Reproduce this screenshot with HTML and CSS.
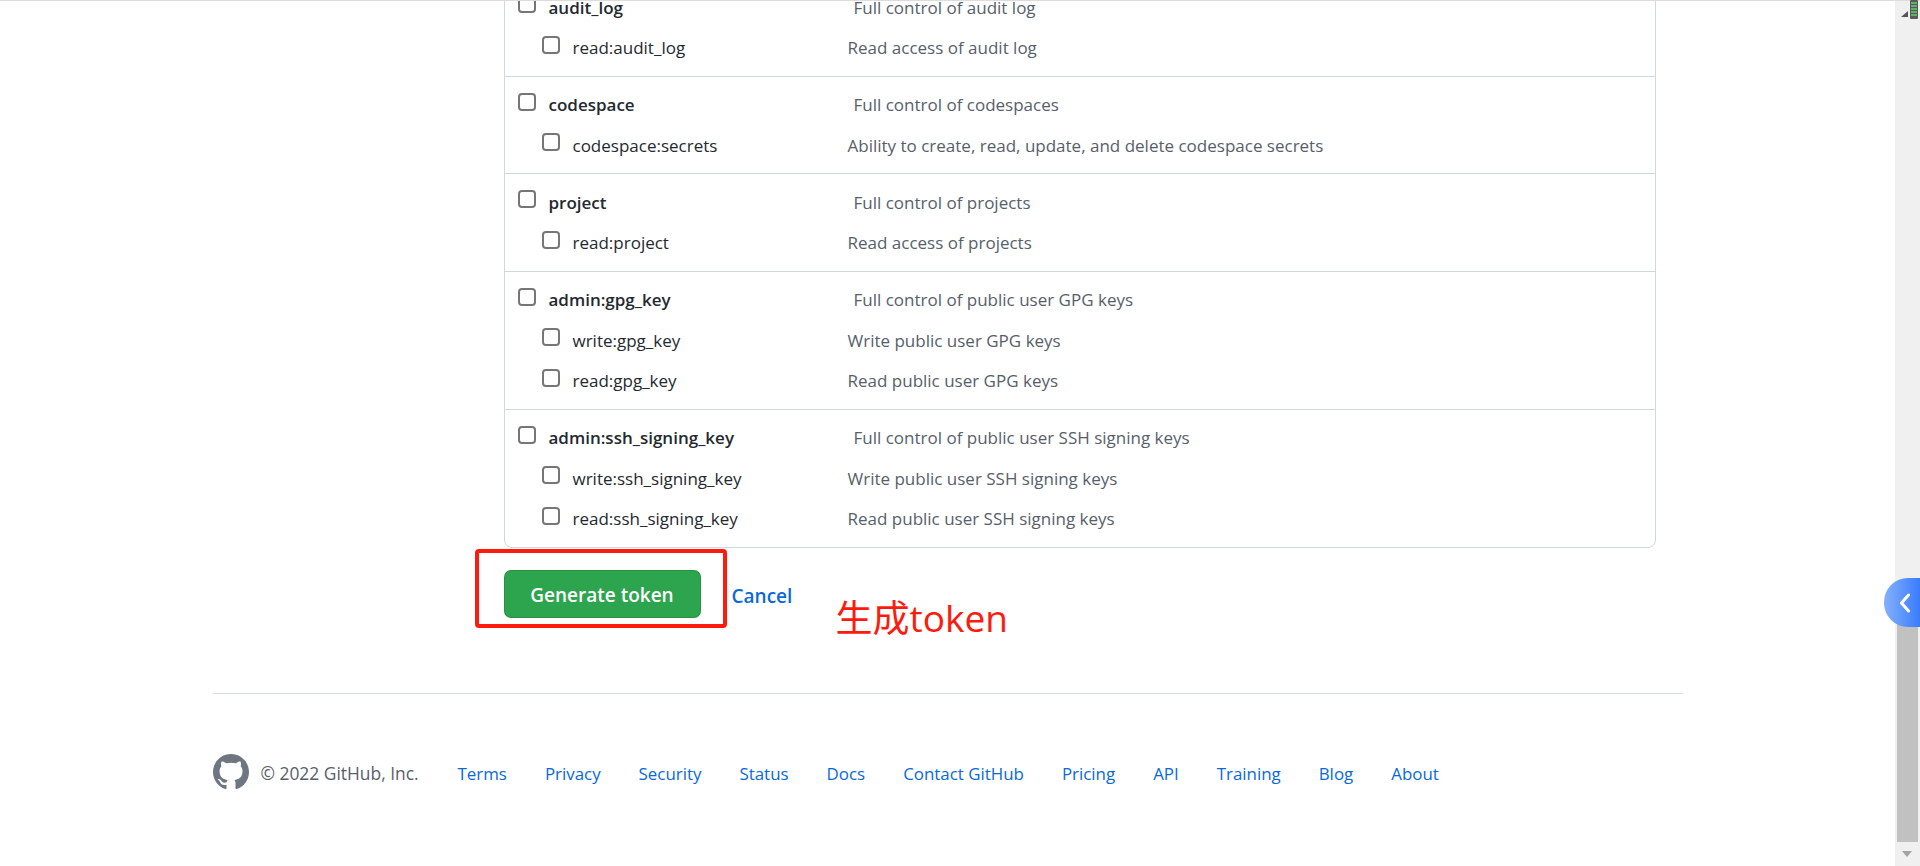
FILE: index.html
```html
<!DOCTYPE html>
<html lang="en">
<head>
    <meta charset="UTF-8">
    <title>New personal access token</title>
    <link rel="stylesheet" href="styles.css">
</head>
<body>
    <div class="page">
        <main class="main">
            <div class="container">
                <form class="token-form">
                    <div class="scopes">
                        <div class="scope-group">
                            <label class="scope"><input type="checkbox"><span class="scope-name">audit_log</span><span class="scope-desc">Full control of audit log</span></label>
                            <label class="scope child"><input type="checkbox"><span class="scope-name">read:audit_log</span><span class="scope-desc">Read access of audit log</span></label>
                        </div>
                        <div class="scope-group">
                            <label class="scope"><input type="checkbox"><span class="scope-name">codespace</span><span class="scope-desc">Full control of codespaces</span></label>
                            <label class="scope child"><input type="checkbox"><span class="scope-name">codespace:secrets</span><span class="scope-desc">Ability to create, read, update, and delete codespace secrets</span></label>
                        </div>
                        <div class="scope-group">
                            <label class="scope"><input type="checkbox"><span class="scope-name">project</span><span class="scope-desc">Full control of projects</span></label>
                            <label class="scope child"><input type="checkbox"><span class="scope-name">read:project</span><span class="scope-desc">Read access of projects</span></label>
                        </div>
                        <div class="scope-group">
                            <label class="scope"><input type="checkbox"><span class="scope-name">admin:gpg_key</span><span class="scope-desc">Full control of public user GPG keys</span></label>
                            <label class="scope child"><input type="checkbox"><span class="scope-name">write:gpg_key</span><span class="scope-desc">Write public user GPG keys</span></label>
                            <label class="scope child"><input type="checkbox"><span class="scope-name">read:gpg_key</span><span class="scope-desc">Read public user GPG keys</span></label>
                        </div>
                        <div class="scope-group">
                            <label class="scope"><input type="checkbox"><span class="scope-name">admin:ssh_signing_key</span><span class="scope-desc">Full control of public user SSH signing keys</span></label>
                            <label class="scope child"><input type="checkbox"><span class="scope-name">write:ssh_signing_key</span><span class="scope-desc">Write public user SSH signing keys</span></label>
                            <label class="scope child"><input type="checkbox"><span class="scope-name">read:ssh_signing_key</span><span class="scope-desc">Read public user SSH signing keys</span></label>
                        </div>
                    </div>
                    <div class="actions">
                        <button type="button" class="btn-generate">Generate token</button>
                        <a class="cancel" href="#">Cancel</a>
                        <!-- screenshot annotations -->
                        <div class="mark-box"></div>
                        <div class="mark-text">生成token</div>
                    </div>
                </form>

                <footer class="footer">
                    <svg class="footer-logo" viewBox="0 0 16 16" aria-hidden="true"><path d="M8 0C3.58 0 0 3.58 0 8c0 3.54 2.29 6.53 5.47 7.59.4.07.55-.17.55-.38 0-.19-.01-.82-.01-1.49-2.01.37-2.53-.49-2.69-.94-.09-.23-.48-.94-.82-1.13-.28-.15-.68-.52-.01-.53.63-.01 1.08.58 1.23.82.72 1.21 1.87.87 2.33.66.07-.52.28-.87.51-1.07-1.78-.2-3.64-.89-3.64-3.95 0-.87.31-1.59.82-2.15-.08-.2-.36-1.02.08-2.12 0 0 .67-.21 2.2.82.64-.18 1.32-.27 2-.27.68 0 1.36.09 2 .27 1.53-1.04 2.2-.82 2.2-.82.44 1.1.16 1.92.08 2.12.51.56.82 1.27.82 2.15 0 3.07-1.87 3.75-3.65 3.95.29.25.54.73.54 1.48 0 1.07-.01 1.93-.01 2.2 0 .21.15.46.55.38A8.013 8.013 0 0016 8c0-4.42-3.58-8-8-8z"/></svg>
                    <span class="copyright">© 2022 GitHub, Inc.</span>
                    <nav class="footer-links">
                        <a href="#">Terms</a>
                        <a href="#">Privacy</a>
                        <a href="#">Security</a>
                        <a href="#">Status</a>
                        <a href="#">Docs</a>
                        <a href="#">Contact GitHub</a>
                        <a href="#">Pricing</a>
                        <a href="#">API</a>
                        <a href="#">Training</a>
                        <a href="#">Blog</a>
                        <a href="#">About</a>
                    </nav>
                </footer>
            </div>
        </main>

        <div class="scrollbar">
            <div class="scroll-thumb"></div>
            <div class="scroll-down"></div>
        </div>
    </div>

    <svg class="tray-widget" viewBox="0 0 18 20" aria-hidden="true">
        <path d="M1 17l7-6v6z" fill="#555"/>
        <rect x="10" y="0" width="8" height="19" rx="1" fill="#5a5a5a"/>
        <path d="M11 3h6M11 6h6M11 9h6M11 12h6M11 15h6" stroke="#5fd068" stroke-width="1.4"/>
    </svg>

    <div class="side-tab">
        <svg viewBox="0 0 12 20" aria-hidden="true"><path d="M9.5 2L2.5 10l7 8" fill="none" stroke="#fff" stroke-width="3" stroke-linecap="round" stroke-linejoin="round"/></svg>
    </div>
</body>
</html>
```

FILE: styles.css
```css
* {
    box-sizing: border-box;
}
html, body {
    height: 100%;
}
body {
    margin: 0;
    overflow: hidden;
    background: #fff;
    color: #24292f;
    font-family: "Open Sans", "Noto Sans CJK SC", sans-serif;
    font-size: 17px;
}
a {
    color: #0969da;
    text-decoration: none;
}
.page {
    display: flex;
    height: 866px;
    border-top: 1px solid #dcdcdc;
}
.main {
    flex: 1;
    overflow: hidden;
}
.container {
    width: 1470px;
    margin: 0 auto;
}
.token-form {
    margin-left: 291px;
    margin-right: 27px;
    margin-top: -23px;
}
.scopes {
    border: 1px solid #d0d7de;
    border-radius: 8px;
}
.scope-group {
    padding: 8px 0 7.5px;
    border-bottom: 1px solid #d0d7de;
}
.scope-group:last-child {
    border-bottom: none;
}
.scope {
    display: flex;
    align-items: center;
    height: 40.5px;
    padding-left: 13px;
}
.scope.child {
    padding-left: 37px;
}
.scope input {
    appearance: none;
    flex: none;
    width: 18px;
    height: 18px;
    margin: 0 13px 6px 0;
    background: #fff;
    border: 2px solid #767676;
    border-radius: 4px;
}
.scope-name {
    flex: none;
    width: 305px;
    font-weight: 600;
}
.scope-desc {
    color: #57606a;
}
.scope.child .scope-name {
    width: 275px;
    font-weight: 400;
}
.actions {
    position: relative;
    display: flex;
    align-items: center;
    margin-top: 22px;
}
.btn-generate {
    width: 197px;
    height: 48px;
    padding: 3px 0 0;
    background: #2da44e;
    border: 1px solid rgba(27, 31, 36, 0.15);
    border-radius: 7px;
    color: #fff;
    font-family: inherit;
    font-size: 19px;
    font-weight: 600;
}
.cancel {
    margin-left: 31px;
    padding-top: 4px;
    font-size: 19px;
    font-weight: 600;
}
.mark-box {
    position: absolute;
    left: -29px;
    top: -21px;
    width: 252px;
    height: 79px;
    border: 4.5px solid #ff1a0e;
    border-radius: 4px;
}
.mark-text {
    position: absolute;
    left: 332px;
    top: 23px;
    color: #ff1a0e;
    font-size: 37px;
    line-height: 50px;
    white-space: nowrap;
}
.footer {
    display: flex;
    align-items: center;
    margin-top: 75px;
    padding-top: 60px;
    border-top: 1px solid #d8dee4;
}
.footer-logo {
    flex: none;
    width: 36px;
    height: 36px;
    margin-right: 12px;
    fill: #6e7781;
}
.copyright {
    width: 197px;
    padding-top: 3px;
    color: #57606a;
    font-size: 17.4px;
}
.footer-links {
    display: flex;
    gap: 38px;
    padding-top: 3px;
    font-size: 16.9px;
}
.scrollbar {
    flex: none;
    display: flex;
    flex-direction: column;
    justify-content: flex-end;
    width: 25px;
    background: #f0f0f0;
}
.scroll-thumb {
    height: 240px;
    margin: 0 2px;
    background: #c1c1c1;
}
.scroll-down {
    position: relative;
    height: 24px;
}
.scroll-down::after {
    content: "";
    position: absolute;
    left: 7px;
    top: 9px;
    border-left: 5.5px solid transparent;
    border-right: 5.5px solid transparent;
    border-top: 6px solid #a3a3a3;
}
.tray-widget {
    position: absolute;
    left: 1900px;
    top: 0;
    width: 18px;
    height: 20px;
}
.side-tab {
    position: absolute;
    left: 1884px;
    top: 578px;
    display: flex;
    align-items: center;
    justify-content: center;
    width: 36px;
    height: 49px;
    padding-left: 6px;
    background: linear-gradient(90deg, #85b0fc, #3a7cff);
    border-radius: 24px 0 0 24px;
}
.side-tab svg {
    width: 12px;
    height: 20px;
}
```
